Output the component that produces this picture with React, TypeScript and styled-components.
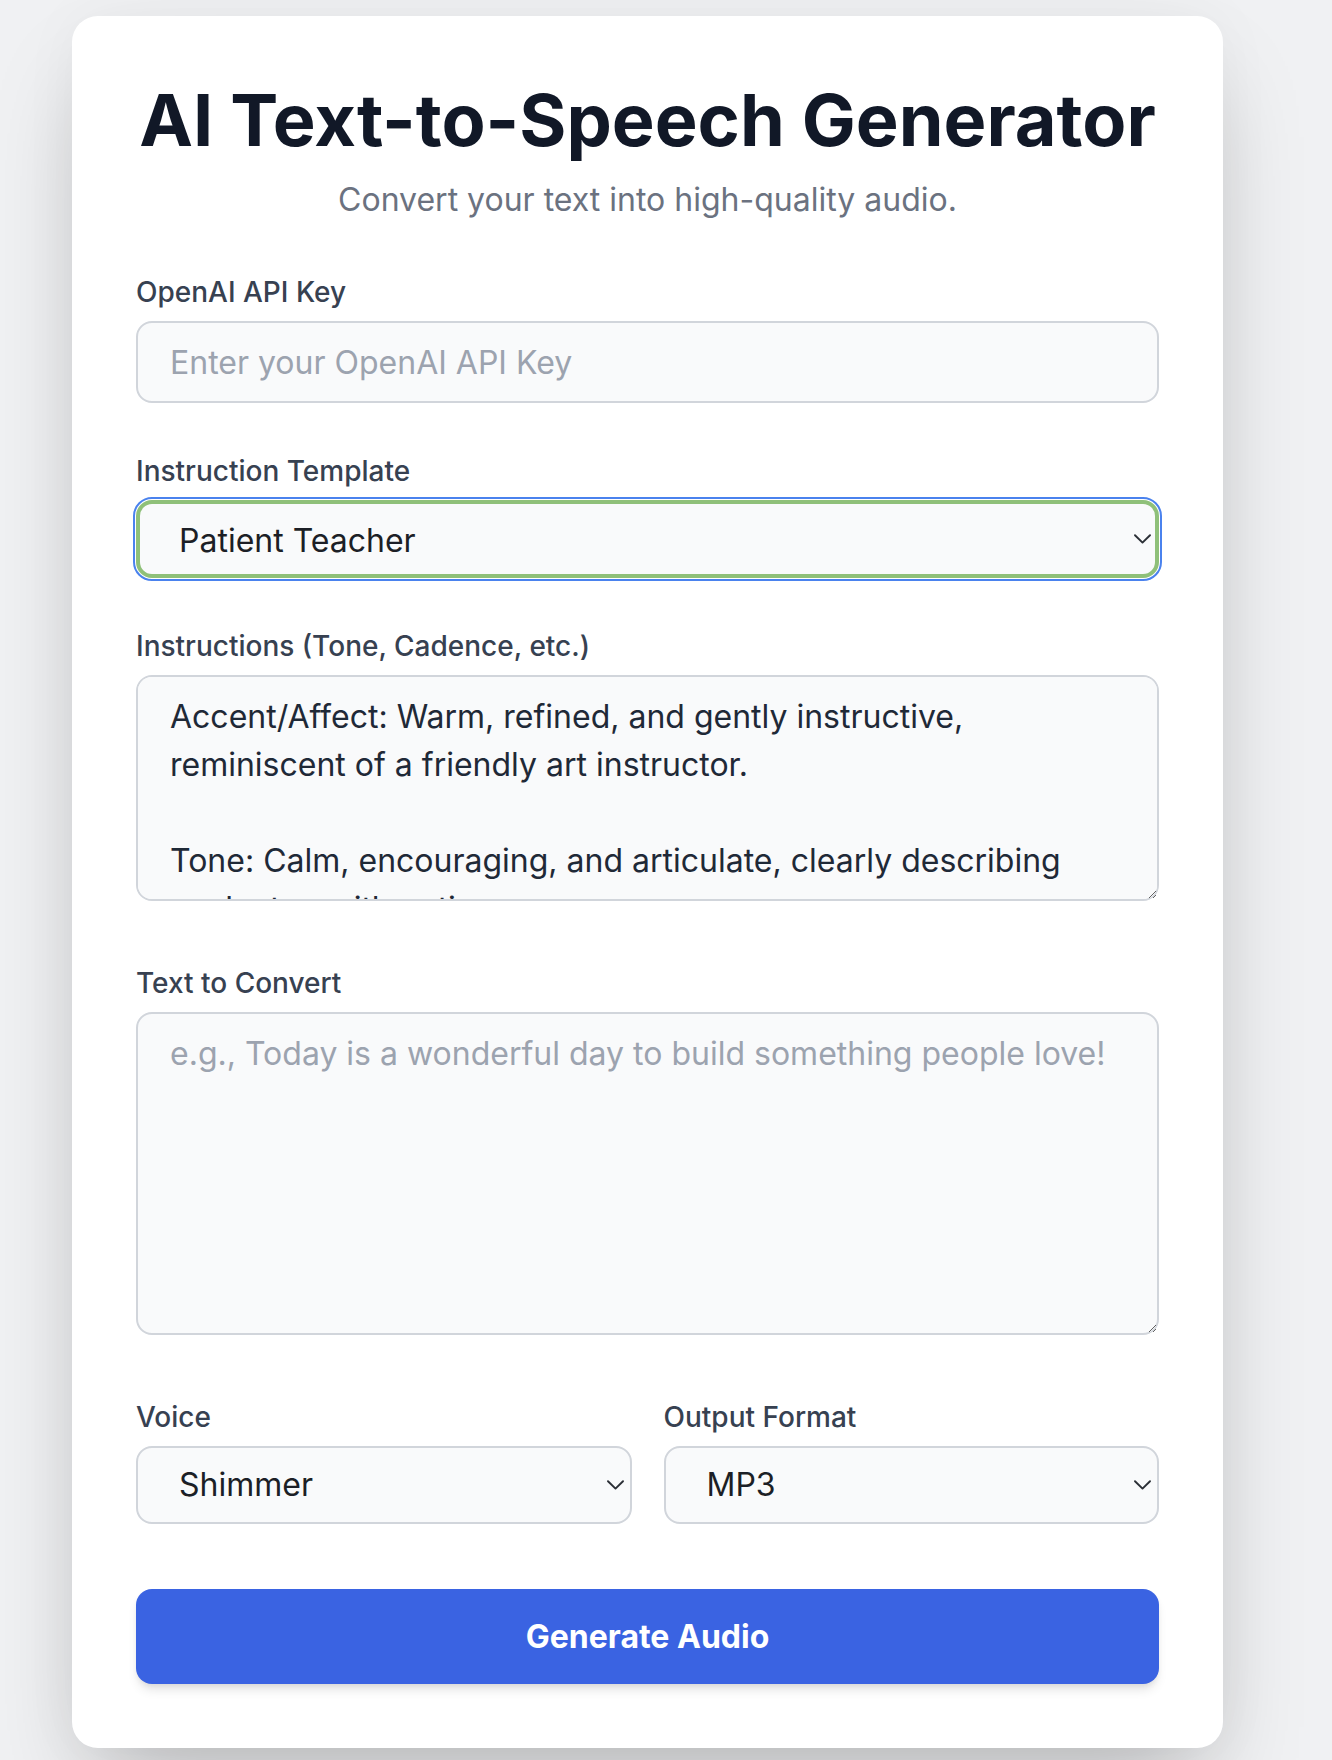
import React from "react";
import styled, { createGlobalStyle, css } from "styled-components";

const GlobalStyle = createGlobalStyle`
  html,
  body {
    margin: 0;
    padding: 0;
    background: #f0f1f3;
    font-family: "Inter", "Noto Sans", "Liberation Sans", sans-serif;
  }
`;

const Page = styled.div`
  min-height: 1760px;
  box-sizing: border-box;
  padding: 16px 0 0 72px;
`;

const Card = styled.main`
  width: 1151px;
  box-sizing: border-box;
  padding: 64px;
  background: #ffffff;
  border-radius: 26px;
  box-shadow: 0 50px 100px -24px rgba(0, 0, 0, 0.25),
    0 0 60px rgba(0, 0, 0, 0.04);
`;

const Title = styled.h1`
  margin: 0;
  color: #111827;
  font-size: 72px;
  font-weight: 700;
  line-height: 80px;
  letter-spacing: 0;
  text-align: center;
`;

const Subtitle = styled.p`
  margin: 16px 0 0 0;
  color: #6b7280;
  font-size: 32px;
  line-height: 48px;
  text-align: center;
`;

const Form = styled.form`
  display: flex;
  flex-direction: column;
  margin-top: 48px;
`;

const Field = styled.div<{ $after?: number }>`
  display: flex;
  flex-direction: column;
  min-width: 0;
  margin-bottom: ${(p) => p.$after ?? 48}px;
`;

const Label = styled.label`
  margin-bottom: 9px;
  color: #374151;
  font-size: 28px;
  font-weight: 500;
  line-height: 40px;
`;

const controlBase = css`
  box-sizing: border-box;
  width: 100%;
  margin: 0;
  border: 2px solid #d1d5db;
  border-radius: 16px;
  background: #f9fafb;
  color: #1f2937;
  font-family: inherit;
  font-size: 32px;
  outline: none;

  &::placeholder {
    color: #9ca3af;
  }
`;

const TextInput = styled.input`
  ${controlBase};
  height: 82px;
  padding: 0 32px;
`;

const TextArea = styled.textarea<{ $height: number }>`
  ${controlBase};
  display: block;
  height: ${(p) => p.$height}px;
  padding: 16px 32px;
  line-height: 48px;
  resize: vertical;
  scrollbar-width: none;

  &::-webkit-scrollbar {
    display: none;
  }
`;

const SelectWrap = styled.div`
  position: relative;
  width: 100%;
`;

const Select = styled.select<{ $focused?: boolean }>`
  ${controlBase};
  appearance: none;
  -webkit-appearance: none;
  height: 78px;
  padding: 0 48px 0 41px;
  color: #1c1f26;
  line-height: 74px;

  ${(p) =>
    p.$focused &&
    css`
      border-width: 4px;
      border-color: #8fc079;
      padding-left: 39px;
      outline: 2px solid #4a82ee;
      outline-offset: 1px;
    `}
`;

const Chevron = styled.svg`
  position: absolute;
  top: 50%;
  right: 8px;
  width: 17px;
  height: 10px;
  margin-top: -5px;
  pointer-events: none;
`;

const Row = styled.div`
  display: grid;
  grid-template-columns: 1fr 1fr;
  column-gap: 32px;
`;

const SubmitButton = styled.button`
  height: 95px;
  margin-top: 17px;
  border: none;
  border-radius: 16px;
  background: #3a63e2;
  color: #ffffff;
  font-family: inherit;
  font-size: 32px;
  font-weight: 700;
  cursor: pointer;
  box-shadow: 0 8px 12px -3px rgba(0, 0, 0, 0.12),
    0 3px 6px -2px rgba(0, 0, 0, 0.08);
`;

const ChevronIcon = () => (
  <Chevron viewBox="0 0 17 10" fill="none">
    <path
      d="M1 1.2 L8.5 8.6 L16 1.2"
      stroke="#2b2f36"
      strokeWidth="1.9"
      strokeLinecap="round"
      strokeLinejoin="round"
    />
  </Chevron>
);

const templates = ["Patient Teacher", "Calm Narrator", "Friendly Host"];
const voices = ["Alloy", "Ash", "Coral", "Echo", "Fable", "Onyx", "Nova", "Sage", "Shimmer"];
const formats = ["MP3", "WAV", "OPUS", "AAC", "FLAC"];

const patientTeacher = `Accent/Affect: Warm, refined, and gently instructive, reminiscent of a friendly art instructor.

Tone: Calm, encouraging, and articulate, clearly describing each step with patience.

Pacing: Slow and deliberate, pausing often to allow the listener to follow instructions comfortably.

Emotion: Cheerful, supportive, and pleasantly enthusiastic; convey genuine enjoyment and appreciation of art.`;

const App: React.FC = () => {
  return (
    <Page>
      <GlobalStyle />
      <Card>
        <Title>AI Text-to-Speech Generator</Title>
        <Subtitle>Convert your text into high-quality audio.</Subtitle>

        <Form onSubmit={(e) => e.preventDefault()}>
          <Field>
            <Label htmlFor="api-key">OpenAI API Key</Label>
            <TextInput
              id="api-key"
              type="password"
              placeholder="Enter your OpenAI API Key"
            />
          </Field>

          <Field>
            <Label htmlFor="template">Instruction Template</Label>
            <SelectWrap>
              <Select id="template" $focused defaultValue="Patient Teacher">
                {templates.map((t) => (
                  <option key={t}>{t}</option>
                ))}
              </Select>
              <ChevronIcon />
            </SelectWrap>
          </Field>

          <Field $after={62}>
            <Label htmlFor="instructions">Instructions (Tone, Cadence, etc.)</Label>
            <TextArea
              id="instructions"
              $height={226}
              defaultValue={patientTeacher}
            />
          </Field>

          <Field $after={62}>
            <Label htmlFor="text">Text to Convert</Label>
            <TextArea
              id="text"
              $height={323}
              placeholder="e.g., Today is a wonderful day to build something people love!"
            />
          </Field>

          <Row>
            <Field>
              <Label htmlFor="voice">Voice</Label>
              <SelectWrap>
                <Select id="voice" defaultValue="Shimmer">
                  {voices.map((v) => (
                    <option key={v}>{v}</option>
                  ))}
                </Select>
                <ChevronIcon />
              </SelectWrap>
            </Field>
            <Field>
              <Label htmlFor="format">Output Format</Label>
              <SelectWrap>
                <Select id="format" defaultValue="MP3">
                  {formats.map((f) => (
                    <option key={f}>{f}</option>
                  ))}
                </Select>
                <ChevronIcon />
              </SelectWrap>
            </Field>
          </Row>

          <SubmitButton type="submit">Generate Audio</SubmitButton>
        </Form>
      </Card>
    </Page>
  );
};

export default App;
